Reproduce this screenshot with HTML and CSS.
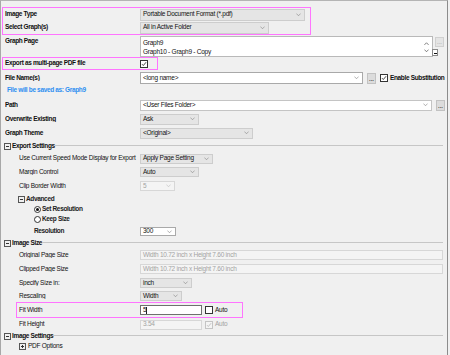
FILE: index.html
```html
<!DOCTYPE html>
<html>
<head>
<meta charset="utf-8">
<link rel="stylesheet" href="styles.css">
</head>
<body>
<div class="panel">

  <div class="mark mark1">
    <div class="row h13">
      <span class="lbl b">Image Type</span>
      <div class="combo c12 w165"><span>Portable Document Format (*.pdf)</span><svg class="chev" viewBox="0 0 6 4"><path d="M0.5 0.6L3 3.2L5.5 0.6"/></svg></div>
    </div>
    <div class="row h13">
      <span class="lbl b">Select Graph(s)</span>
      <div class="combo c12 w129"><span>All in Active Folder</span><svg class="chev" viewBox="0 0 6 4"><path d="M0.5 0.6L3 3.2L5.5 0.6"/></svg></div>
    </div>
  </div>

  <div class="row h22 top">
    <span class="lbl b lt">Graph Page</span>
    <div class="listbox">
      <div class="items">
        <div>Graph9</div>
        <div>Graph10 - Graph9 - Copy</div>
      </div>
      <div class="sb">
        <svg class="arr" viewBox="0 0 6 4"><path d="M0.5 3.4L3 0.8L5.5 3.4"/></svg>
        <svg class="arr" viewBox="0 0 6 4"><path d="M0.5 0.6L3 3.2L5.5 0.6"/></svg>
      </div>
      <span class="grip"><span></span></span>
    </div>
    <span class="btn btn-list">...</span>
  </div>

  <div class="mark mark2">
    <div class="row h11">
      <span class="lbl b">Export as multi-page PDF file</span>
      <span class="cb"><svg viewBox="0 0 8 8"><path d="M1.3 4.2L3.1 6L6.8 1.6"/></svg></span>
    </div>
  </div>

  <div class="row h14 mt1">
    <span class="lbl b">File Name(s)</span>
    <div class="field c12 w223"><span>&lt;long name&gt;</span><svg class="chev" viewBox="0 0 6 4"><path d="M0.5 0.6L3 3.2L5.5 0.6"/></svg></div>
    <span class="btn btn-fn">...</span>
    <span class="cb cb-sub"><svg viewBox="0 0 8 8"><path d="M1.3 4.2L3.1 6L6.8 1.6"/></svg></span>
    <span class="b sub">Enable Substitution</span>
  </div>

  <div class="row h10">
    <span class="saved">File will be saved as: Graph9</span>
  </div>

  <div class="row h14 mt3">
    <span class="lbl b">Path</span>
    <div class="field c11 w292 path"><span>&lt;User Files Folder&gt;</span><svg class="chev" viewBox="0 0 6 4"><path d="M0.5 0.6L3 3.2L5.5 0.6"/></svg></div>
    <span class="btn btn-path">...</span>
  </div>

  <div class="row h14">
    <span class="lbl b">Overwrite Existing</span>
    <div class="combo c11 w59"><span>Ask</span><svg class="chev" viewBox="0 0 6 4"><path d="M0.5 0.6L3 3.2L5.5 0.6"/></svg></div>
  </div>

  <div class="row h14">
    <span class="lbl b">Graph Theme</span>
    <div class="combo c11 w113"><span>&lt;Original&gt;</span><svg class="chev" viewBox="0 0 6 4"><path d="M0.5 0.6L3 3.2L5.5 0.6"/></svg></div>
  </div>

  <div class="row h12 tree">
    <span class="tbox minus"></span>
    <span class="b htext">Export Settings</span>
    <span class="hline"></span>
  </div>

  <div class="row h13">
    <span class="lbl ind">Use Current Speed Mode Display for Export</span>
    <div class="combo c10 w73"><span>Apply Page Setting</span><svg class="chev" viewBox="0 0 6 4"><path d="M0.5 0.6L3 3.2L5.5 0.6"/></svg></div>
  </div>

  <div class="row h14">
    <span class="lbl ind">Margin Control</span>
    <div class="combo c10 w59"><span>Auto</span><svg class="chev" viewBox="0 0 6 4"><path d="M0.5 0.6L3 3.2L5.5 0.6"/></svg></div>
  </div>

  <div class="row h14">
    <span class="lbl ind">Clip Border Width</span>
    <div class="combo c10 w35 dis"><span>5</span><svg class="chev" viewBox="0 0 6 4"><path d="M0.5 0.6L3 3.2L5.5 0.6"/></svg></div>
  </div>

  <div class="row h12 tree2">
    <span class="tbox minus"></span>
    <span class="sb6 htext">Advanced</span>
  </div>

  <div class="row h9 radrow">
    <span class="radio on"></span>
    <span class="sb6 rtext">Set Resolution</span>
  </div>

  <div class="row h10 radrow">
    <span class="radio"></span>
    <span class="sb6 rtext">Keep Size</span>
  </div>

  <div class="row h15">
    <span class="lbl ind2 sb6">Resolution</span>
    <div class="field c9 w36"><span>300</span><svg class="chev" viewBox="0 0 6 4"><path d="M0.5 0.6L3 3.2L5.5 0.6"/></svg></div>
  </div>

  <div class="row h9 tree">
    <span class="tbox minus"></span>
    <span class="b htext">Image Size</span>
    <span class="hline"></span>
  </div>

  <div class="row h14">
    <span class="lbl ind">Original Page Size</span>
    <div class="field c10 w303 dis"><span>Width 10.72 inch x Height 7.60 inch</span></div>
  </div>

  <div class="row h14">
    <span class="lbl ind">Clipped Page Size</span>
    <div class="field c10 w303 dis"><span>Width 10.72 inch x Height 7.60 inch</span></div>
  </div>

  <div class="row h14">
    <span class="lbl ind">Specify Size in:</span>
    <div class="combo c10 w52"><span>inch</span><svg class="chev" viewBox="0 0 6 4"><path d="M0.5 0.6L3 3.2L5.5 0.6"/></svg></div>
  </div>

  <div class="row h12">
    <span class="lbl ind">Rescaling</span>
    <div class="combo c10 w42"><span>Width</span><svg class="chev" viewBox="0 0 6 4"><path d="M0.5 0.6L3 3.2L5.5 0.6"/></svg></div>
  </div>

  <div class="mark mark3">
    <div class="row h14">
      <span class="lbl lbl3">Fit Width</span>
      <div class="field c10 w62 act"><span>5</span><span class="caret"></span></div>
      <span class="cb cb-auto"></span>
      <span class="auto">Auto</span>
    </div>
  </div>

  <div class="row h13">
    <span class="lbl ind">Fit Height</span>
    <div class="field c10 w62 dis"><span>3.54</span></div>
    <span class="cb cb-auto cb-dis"><svg viewBox="0 0 8 8"><path d="M1.3 4.2L3.1 6L6.8 1.6"/></svg></span>
    <span class="auto dtext">Auto</span>
  </div>

  <div class="row h11 tree">
    <span class="tbox minus"></span>
    <span class="b htext">Image Settings</span>
    <span class="hline"></span>
  </div>

  <div class="row h9 tree3">
    <span class="tbox plus"></span>
    <span class="htext2">PDF Options</span>
  </div>

</div>
</body>
</html>
```

FILE: styles.css
```css
* { box-sizing: border-box; margin: 0; padding: 0; }

html, body {
  width: 450px;
  height: 355px;
  overflow: hidden;
  background: #f0f0f0;
}

body {
  font-family: "Liberation Sans", Arial, sans-serif;
  font-size: 6.5px;
  letter-spacing: -0.25px;
  color: #111;
  line-height: 1;
}

.panel {
  width: 448px;
  height: 355px;
  background: #f0f0f0;
  border-left: 1px solid #a8a8a8;
  border-top: 1px solid #b4b4b4;
  border-right: 1px solid #8c8c8c;
  padding-top: 6px;
}

.row {
  display: flex;
  align-items: center;
  padding-left: 4px;
  white-space: nowrap;
}
.row.top { align-items: flex-start; }

.h9 { height: 9px; }
.h10 { height: 10px; }
.h11 { height: 11px; }
.h12 { height: 12px; }
.h13 { height: 13px; }
.h14 { height: 14px; }
.h15 { height: 15px; }
.h22 { height: 22px; }
.mt1 { margin-top: 1px; }
.mt3 { margin-top: 3px; }

.lbl { width: 135px; flex: none; overflow: hidden; }
.lbl.lt { margin-top: 3px; }
.ind { padding-left: 14px; }
.ind2 { padding-left: 29px; }
.b { font-weight: 700; letter-spacing: -0.35px; }
.sb6 { font-weight: 700; letter-spacing: -0.35px; color: #222; }

/* pink annotation boxes */
.mark { border: 1px solid #ff74ff; margin-left: 1px; }
.mark .row { padding-left: 2px; }
.mark1 { width: 309px; height: 28px; }
.mark2 { width: 156px; height: 13px; }
.mark3 { width: 227px; height: 16px; margin-left: 15px; }
.lbl3 { width: 121px; }

/* combo boxes */
.combo, .field {
  flex: none;
  display: flex;
  align-items: center;
  padding-left: 2px;
  overflow: hidden;
}
.combo {
  background: #e5e5e5;
  border: 1px solid #cdcdcd;
}
.field {
  background: #fff;
  border: 1px solid #a9a9a9;
}
.field.path { border-color: #c4c4c4; }
.field.act { border-color: #6f6f6f; }
.combo.dis, .field.dis {
  background: #f4f4f4;
  border-color: #d7d7d7;
  color: #a3a3a3;
}
.c9 { height: 9px; }
.c10 { height: 10px; }
.c11 { height: 11px; }
.c12 { height: 12px; }

.w35 { width: 35px; }
.w36 { width: 36px; }
.w42 { width: 42px; }
.w52 { width: 52px; }
.w59 { width: 59px; }
.w62 { width: 62px; }
.w73 { width: 73px; }
.w113 { width: 113px; }
.w129 { width: 129px; }
.w165 { width: 165px; }
.w223 { width: 223px; }
.w292 { width: 292px; }
.w303 { width: 303px; }

.chev {
  width: 5px;
  height: 3.5px;
  margin-left: auto;
  margin-right: 3px;
  flex: none;
}
.chev path, .arr path {
  fill: none;
  stroke: #8a8a8a;
  stroke-width: 0.8;
}
.dis .chev path { stroke: #c0c0c0; }

/* list box */
.listbox {
  position: relative;
  width: 293px;
  height: 21px;
  margin-top: 1px;
  background: #fff;
  border: 1px solid #b9b9b9;
  display: flex;
  flex: none;
}
.items {
  flex: 1;
  padding: 1px 0 0 2px;
}
.items div { height: 9px; line-height: 9px; }
.sb {
  width: 10px;
  display: flex;
  flex-direction: column;
  align-items: center;
  justify-content: space-around;
  padding: 3px 0 2px;
  margin-right: 1px;
}
.arr { width: 5px; height: 3.5px; }
.arr path { stroke: #444; }
.grip {
  position: absolute;
  right: -6px;
  bottom: 0;
  width: 6px;
  height: 7px;
  background: #fff;
  border: 1px solid #8a8a8a;
  display: flex;
  align-items: flex-end;
  justify-content: center;
  padding-bottom: 1px;
}
.grip span { width: 3px; height: 1px; background: #111; }

/* buttons */
.btn {
  flex: none;
  background: #dcdcdc;
  border: 1px solid #c2c2c2;
  color: #444;
  font-weight: 700;
  font-size: 6px;
  letter-spacing: 0;
  display: flex;
  align-items: flex-end;
  justify-content: center;
  line-height: 5px;
  padding-bottom: 1px;
}
.btn-list { width: 9px; height: 10px; margin: 2px 0 0 2px; color: #bdbdbd; background: #e4e4e4; border-color: #d0d0d0; }
.btn-fn { width: 9px; height: 11px; margin-left: 4px; }
.btn-path { width: 9px; height: 11px; margin-left: 4px; }

/* checkbox */
.cb {
  flex: none;
  width: 8px;
  height: 8px;
  background: #fff;
  border: 1px solid #333;
  display: flex;
  align-items: center;
  justify-content: center;
}
.cb svg { width: 6px; height: 6px; }
.cb path { fill: none; stroke: #222; stroke-width: 1.1; }
.cb-sub { margin-left: 4px; }
.sub { margin-left: 2px; }
.cb-auto { margin-left: 3px; }
.cb-dis { border-color: #c4c4c4; background: #f4f4f4; }
.cb-dis path { stroke: #b8b8b8; }
.auto { margin-left: 2px; }
.dtext { color: #a3a3a3; }
.caret { width: 1px; height: 7px; background: #222; margin-left: 0; }

.saved {
  margin-left: 2px;
  color: #2f8ff0;
  font-weight: 700;
  letter-spacing: -0.35px;
}

/* tree headers */
.tree { padding-left: 3px; }
.tree2 { padding-left: 17px; }
.tree3 { padding-left: 18px; }
.tbox {
  flex: none;
  width: 7px;
  height: 7px;
  border: 1px solid #555;
  position: relative;
  display: flex;
  align-items: center;
  justify-content: center;
}
.tbox::before {
  content: "";
  width: 3px;
  height: 1px;
  background: #333;
}
.tbox.plus::after {
  content: "";
  position: absolute;
  width: 1px;
  height: 3px;
  background: #333;
}
.htext { margin-left: 1px; }
.htext2 { margin-left: 2px; }
.hline {
  flex: 1;
  height: 0;
  border-top: 1px solid #c6c6c6;
  margin-right: 4px;
  margin-bottom: 2px;
}

/* radios */
.radrow { padding-left: 33px; }
.radio {
  flex: none;
  width: 7px;
  height: 7px;
  border-radius: 50%;
  border: 1px solid #333;
  background: #fff;
  display: flex;
  align-items: center;
  justify-content: center;
}
.radio.on::before {
  content: "";
  width: 3px;
  height: 3px;
  border-radius: 50%;
  background: #111;
}
.rtext { margin-left: 1px; }
```
